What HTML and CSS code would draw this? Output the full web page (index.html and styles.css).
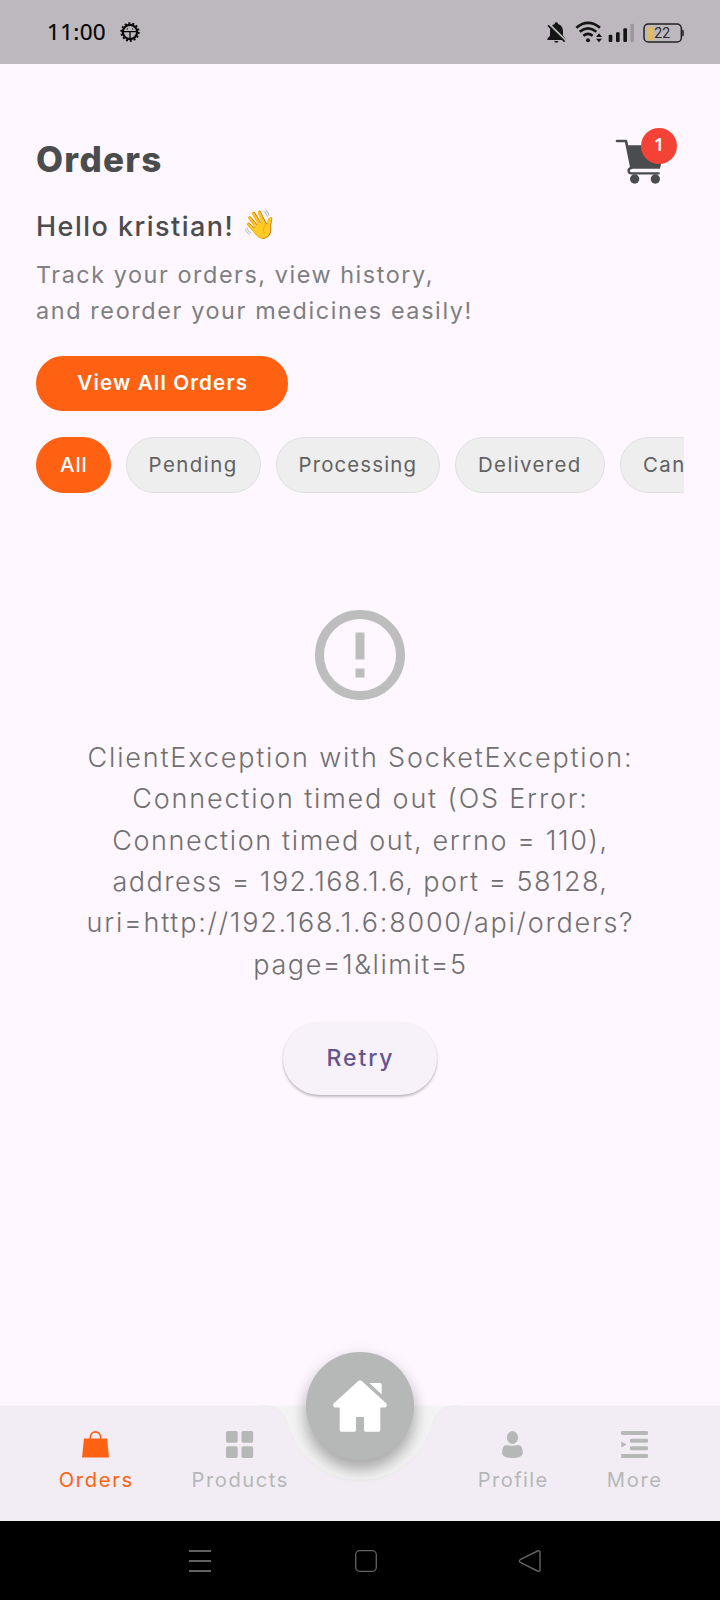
FILE: index.html
```html
<!DOCTYPE html>
<html lang="en">
<head>
<meta charset="utf-8">
<title>Orders</title>
<link rel="stylesheet" href="styles.css">
</head>
<body>
<div class="status">
  <span class="clock">11:00</span>
  <svg class="gear" viewBox="-30 -30 60 60">
    <circle r="26" fill="none" stroke="#080808" stroke-width="6" stroke-dasharray="6 5.670"/>
    <circle r="21.500" fill="none" stroke="#080808" stroke-width="6.500"/>
    <path d="M-20-1H20M0 0V22" fill="none" stroke="#080808" stroke-width="4"/>
    <circle cx="-8" cy="-9" r="2" fill="#080808"/><circle cx="8" cy="-9" r="2" fill="#080808"/>
  </svg>
  <svg class="indicators" viewBox="75 55 425 80">
    <g fill="#151515">
      <path d="M109 65c3 0 5 2 5 5 10 3 15 11 15 21v14l8 9v4H82v-4l8-9V91c0-10 5-18 14-21 0-3 2-5 5-5zM103 121h12c0 4-3 5-6 5s-6-1-6-5z"/>
      <path d="M87 70L138 120" stroke="#bdb8be" stroke-width="6"/>
      <path d="M84 74L134 123" stroke="#151515" stroke-width="5"/>
      <circle cx="204" cy="119" r="6"/>
      <path d="M169 81Q204 52 240 81M179 93Q204 73 229 93M190 105Q204 94 218 105" fill="none" stroke="#151515" stroke-width="8"/>
      <path d="M228 109l9-11 9 11zM228 114h18l-9 11z"/>
      <rect x="266" y="102" width="11" height="22" rx="3"/>
      <rect x="288" y="95" width="11" height="29" rx="3"/>
      <rect x="310" y="83" width="11" height="41" rx="3"/>
      <rect x="331" y="69" width="11" height="55" rx="3" fill="#9d989e"/>
    </g>
    <rect x="372" y="70" width="112" height="54" rx="13" fill="none" stroke="#222" stroke-width="4.500"/>
    <rect x="382" y="78" width="20" height="41" rx="5" fill="#e2ba62"/>
    <path d="M486 87h2q4 0 4 4v12q0 4-4 4h-2z" fill="#444"/>
    <text class="battery" x="403" y="111">22</text>
  </svg>
</div>

<main class="page">
  <header class="head">
    <h1 class="title">Orders</h1>
    <div class="cart">
      <svg class="cart-icon" viewBox="60 40 210 190">
        <path d="M81 94H108L124 172" fill="none" stroke="#4a4c4d" stroke-width="8" stroke-linecap="round" stroke-linejoin="round"/>
        <path d="M111 107H226L210 177H123z" fill="#4a4c4d"/>
        <path d="M124 175C113 176 113 191 124 191H206" fill="none" stroke="#4a4c4d" stroke-width="7" stroke-linecap="round"/>
        <circle cx="134" cy="208" r="14" fill="#4a4c4d"/><circle cx="196" cy="208" r="14" fill="#4a4c4d"/>
      </svg>
      <span class="badge">1</span>
    </div>
  </header>
  <h2 class="hello"><span>Hello kristian!</span><span class="wave">👋</span></h2>
  <p class="intro"><span class="in1">Track your orders, view history,</span><br><span class="in2">and reorder your medicines easily!</span></p>
  <button class="view-all">View All Orders</button>
  <div class="chips">
    <span class="chip active">All</span>
    <span class="chip pending">Pending</span>
    <span class="chip processing">Processing</span>
    <span class="chip delivered">Delivered</span>
    <span class="chip cancelled">Cancelled</span>
  </div>
  <section class="error">
    <svg class="alert" viewBox="0 0 90 90">
      <circle cx="45" cy="45" r="40.5" fill="none" stroke="#bdbdbd" stroke-width="9"/>
      <path d="M40.5 22.5h9v27h-9zM40.5 58.5h9v9h-9z" fill="#bdbdbd"/>
    </svg>
    <p class="message">
      <span class="m1">ClientException with SocketException:</span>
      <span class="m2">Connection timed out (OS Error:</span>
      <span class="m3">Connection timed out, errno = 110),</span>
      <span class="m4">address = 192.168.1.6, port = 58128,</span>
      <span class="m5">uri=http://192.168.1.6:8000/api/orders?</span>
      <span class="m6">page=1&amp;limit=5</span>
    </p>
    <button class="retry">Retry</button>
  </section>
</main>

<nav class="tabs">
  <svg class="tabs-bg" viewBox="0 0 720 116">
    <path d="M260 .5H460V80H260z" fill="#f3f3f3"/>
    <path d="M0 .5H262C278 .5 284 8 287 18C297 54 328 75.500 360 75.500S423 54 433 18C436 8 442 .5 458 .5H720V116H0z" fill="#f2edf4"/>
    <path d="M262 .5C278 .5 284 8 287 18C297 54 328 75.500 360 75.500S423 54 433 18C436 8 442 .5 458 .5" fill="none" stroke="#ededee"/>
  </svg>
  <a class="tab t-orders">
    <svg viewBox="0 0 27 27"><path d="M2 7.5H25L27 26.5H0z" fill="#ff6112"/><path d="M8.3 8V6.5a5 5.500 0 0 1 10.400 0V8" fill="none" stroke="#ff6112" stroke-width="1.7"/></svg>
    <span>Orders</span>
  </a>
  <a class="tab t-products">
    <svg viewBox="0 0 27 27" fill="#b5b8b7"><rect width="11.7" height="11.7" rx="1.8"/><rect x="15.5" width="11.7" height="11.7" rx="1.8"/><rect y="15.3" width="11.7" height="11.7" rx="1.8"/><rect x="15.5" y="15.3" width="11.7" height="11.7" rx="1.8"/></svg>
    <span>Products</span>
  </a>
  <a class="tab t-profile">
    <svg viewBox="0 0 27 27" fill="#b5b8b7"><ellipse cx="13.5" cy="6.500" rx="5.600" ry="6.500"/><path d="M8 14Q10.500 14.800 13.500 14.800T19 14C22.500 14 23.800 17.500 23.800 22C23.800 26 18 27 13.500 27S3.200 26 3.200 22C3.200 17.500 4.500 14 8 14z"/></svg>
    <span>Profile</span>
  </a>
  <a class="tab t-more">
    <svg viewBox="0 0 27 27" fill="#b5b8b7"><rect width="27" height="4" rx="1.300"/><rect x="9" y="7.700" width="18" height="4" rx="1.300"/><rect x="9" y="15.300" width="18" height="4" rx="1.300"/><rect y="23" width="27" height="4" rx="1.300"/><path d="M.3 10.500L5.500 13.500L.3 16.500z"/></svg>
    <span>More</span>
  </a>
  <div class="home">
    <svg viewBox="0 0 54 52" fill="#fff"><path d="M25.300 1Q27 -.4 28.700 1L53.300 23.500Q54.300 24.500 53.700 26T51.500 27.500H47.300V50Q47.300 51.700 45.600 51.700H32.500Q31 51.700 31 50V37H23V50Q23 51.700 21.500 51.700H8.400Q6.700 51.700 6.700 50V27.500H2.500Q.8 27.500 .3 26T.7 23.500z"/><path d="M36.500 3H47Q48.700 3 48.700 4.700V14.500z"/></svg>
  </div>
</nav>

<footer class="sysnav">
  <svg viewBox="0 0 360 26" fill="none" stroke="#636363">
    <path d="M9 3H31M9 13H31M9 23H31" stroke-width="1.800"/>
    <rect x="175.700" y="2.700" width="20.600" height="20.600" rx="4" stroke-width="1.300"/>
    <path d="M340.200 11.700L357.500 3Q360 2 360 4.500V21.500Q360 24 357.500 23L340.200 14.300Q338.500 13 340.200 11.700z" stroke-width="1.400"/>
  </svg>
</footer>
</body>
</html>
```
FILE: styles.css
```css
* { box-sizing: border-box; }
body {
  margin: 0;
  width: 720px;
  height: 1600px;
  display: flex;
  flex-direction: column;
  background: #fef7ff;
  font-family: Inter, sans-serif;
  overflow: hidden;
}
h1, h2, p { margin: 0; }
button { border: 0; font-family: inherit; display: block; white-space: nowrap; }

.status {
  height: 64px;
  flex: none;
  display: flex;
  align-items: center;
  padding: 0 28px 0 47px;
  background: #bdb8be;
}
.clock { font: 400 22.500px/64px "Noto Sans", sans-serif; letter-spacing: .3px; color: #050505; width: 73px; -webkit-text-stroke: .2px #050505; }
.gear { width: 20px; height: 20px; }
.indicators { width: 141.700px; height: 26.700px; margin-left: auto; margin-right: 5px; }
.battery { font: 400 42px Roboto, sans-serif; fill: #2a2a2a; }

.page { flex: 1; padding: 65px 36px 0; }
.head { height: 60px; display: flex; justify-content: space-between; }
.title { font-size: 35px; font-weight: 780; line-height: 61px; letter-spacing: 1.300px; color: #4a4c4d; }
.cart { position: relative; width: 70px; height: 63px; margin: -5.700px 4px 0 0; }
.cart-icon { width: 70px; height: 63.300px; display: block; }
.badge {
  position: absolute;
  left: 31px;
  top: 4.500px;
  width: 36px;
  height: 36px;
  border-radius: 50%;
  background: #f44336;
  color: #fff;
  text-align: center;
  font: 600 17.500px/33px "Noto Sans", sans-serif;
}
.hello {
  margin-top: 20px;
  height: 35px;
  display: flex;
  align-items: center;
  font-size: 27px;
  font-weight: 550;
  line-height: 36px;
  letter-spacing: 1.480px;
  color: #4a4c4d;
}
.wave { margin: -3px 0 0 8px; font: 400 28px/36px "Noto Color Emoji", sans-serif; }
.intro { margin-top: 12.500px; font-size: 23.400px; line-height: 36px; color: #7d7f80; white-space: nowrap; }
.in1 { letter-spacing: 1.550px; }
.in2 { letter-spacing: 1.620px; }
.view-all {
  margin-top: 27.500px;
  width: 252px;
  height: 54.500px;
  padding: 0 0 1px 1.500px;
  border-radius: 27px;
  background: #ff6112;
  color: #fff;
  font-size: 20.600px;
  font-weight: 600;
  letter-spacing: 1.150px;
}
.chips { margin-top: 26.500px; height: 56px; display: flex; gap: 15px; overflow: hidden; }
.chip {
  flex: none;
  height: 56px;
  border: 1.500px solid #e0e0e0;
  border-radius: 28px;
  background: #eee;
  color: #616161;
  font-size: 20.400px;
  line-height: 54px;
  padding-left: 22px;
  letter-spacing: 1.400px;
}
.active { width: 74.500px; padding-left: 23px; background: #ff6112; border-color: #ff6112; color: #fff; font-weight: 450; letter-spacing: 1px; }
.pending { width: 135px; letter-spacing: 1.500px; }
.processing { width: 164.500px; letter-spacing: 1.150px; }
.delivered { width: 150px; letter-spacing: 1.400px; }
.cancelled { width: 150px; }

.error { margin-top: 117px; display: flex; flex-direction: column; align-items: center; }
.alert { width: 90px; height: 90px; }
.message {
  margin-top: 36.800px;
  display: flex;
  flex-direction: column;
  align-items: center;
  font-size: 27px;
  font-weight: 320;
  line-height: 41.400px;
  color: #707070;
  white-space: nowrap;
}
.message span { margin-right: -1px; }
.m1 { letter-spacing: 1.820px; }
.m2 { letter-spacing: 1.820px; }
.m3 { letter-spacing: 1.620px; }
.m4 { letter-spacing: 1.430px; }
.m5 { letter-spacing: 1.760px; }
.m6 { letter-spacing: 1.550px; }
.retry {
  margin-top: 36.800px;
  width: 154px;
  height: 73px;
  padding: 0 0 2px 1px;
  border-radius: 36.500px;
  background: #f7f2fa;
  box-shadow: 0 2px 3px rgba(0, 0, 0, .22), 0 1px 2px rgba(0, 0, 0, .08);
  color: #65558f;
  font-size: 23px;
  font-weight: 450;
  letter-spacing: 1.900px;
}

.tabs { position: relative; height: 116px; flex: none; display: flex; padding-left: 45.500px; }
.tabs-bg { position: absolute; inset: 0; width: 720px; height: 116px; }
.tab {
  position: relative;
  width: 100px;
  padding-top: 26px;
  display: flex;
  flex-direction: column;
  align-items: center;
  color: #b5b8b7;
  font-size: 20.200px;
  line-height: 24px;
}
.tab svg { width: 27px; height: 27px; overflow: visible; }
.tab span { margin: 9.500px -1.500px 0 0; letter-spacing: 1.650px; }
.t-orders { color: #ff6112; }
.t-products { margin-left: 44px; }
.t-products span { letter-spacing: 1.550px; }
.t-profile { margin-left: 173px; }
.t-profile span { letter-spacing: 1.400px; }
.t-more { margin-left: 21.500px; }
.home {
  position: absolute;
  left: 306px;
  top: -53px;
  width: 108px;
  height: 108px;
  border-radius: 50%;
  background: #b5b8b7;
  box-shadow: 0 10px 15px rgba(0, 0, 0, .27), 0 3px 18px rgba(0, 0, 0, .08);
}
.home svg { display: block; width: 54px; height: 52px; margin: 28px 0 0 27px; }

.sysnav { height: 79px; flex: none; background: #000; display: flex; justify-content: center; padding-top: 27px; }
.sysnav svg { width: 360px; height: 26px; overflow: visible; }
```
